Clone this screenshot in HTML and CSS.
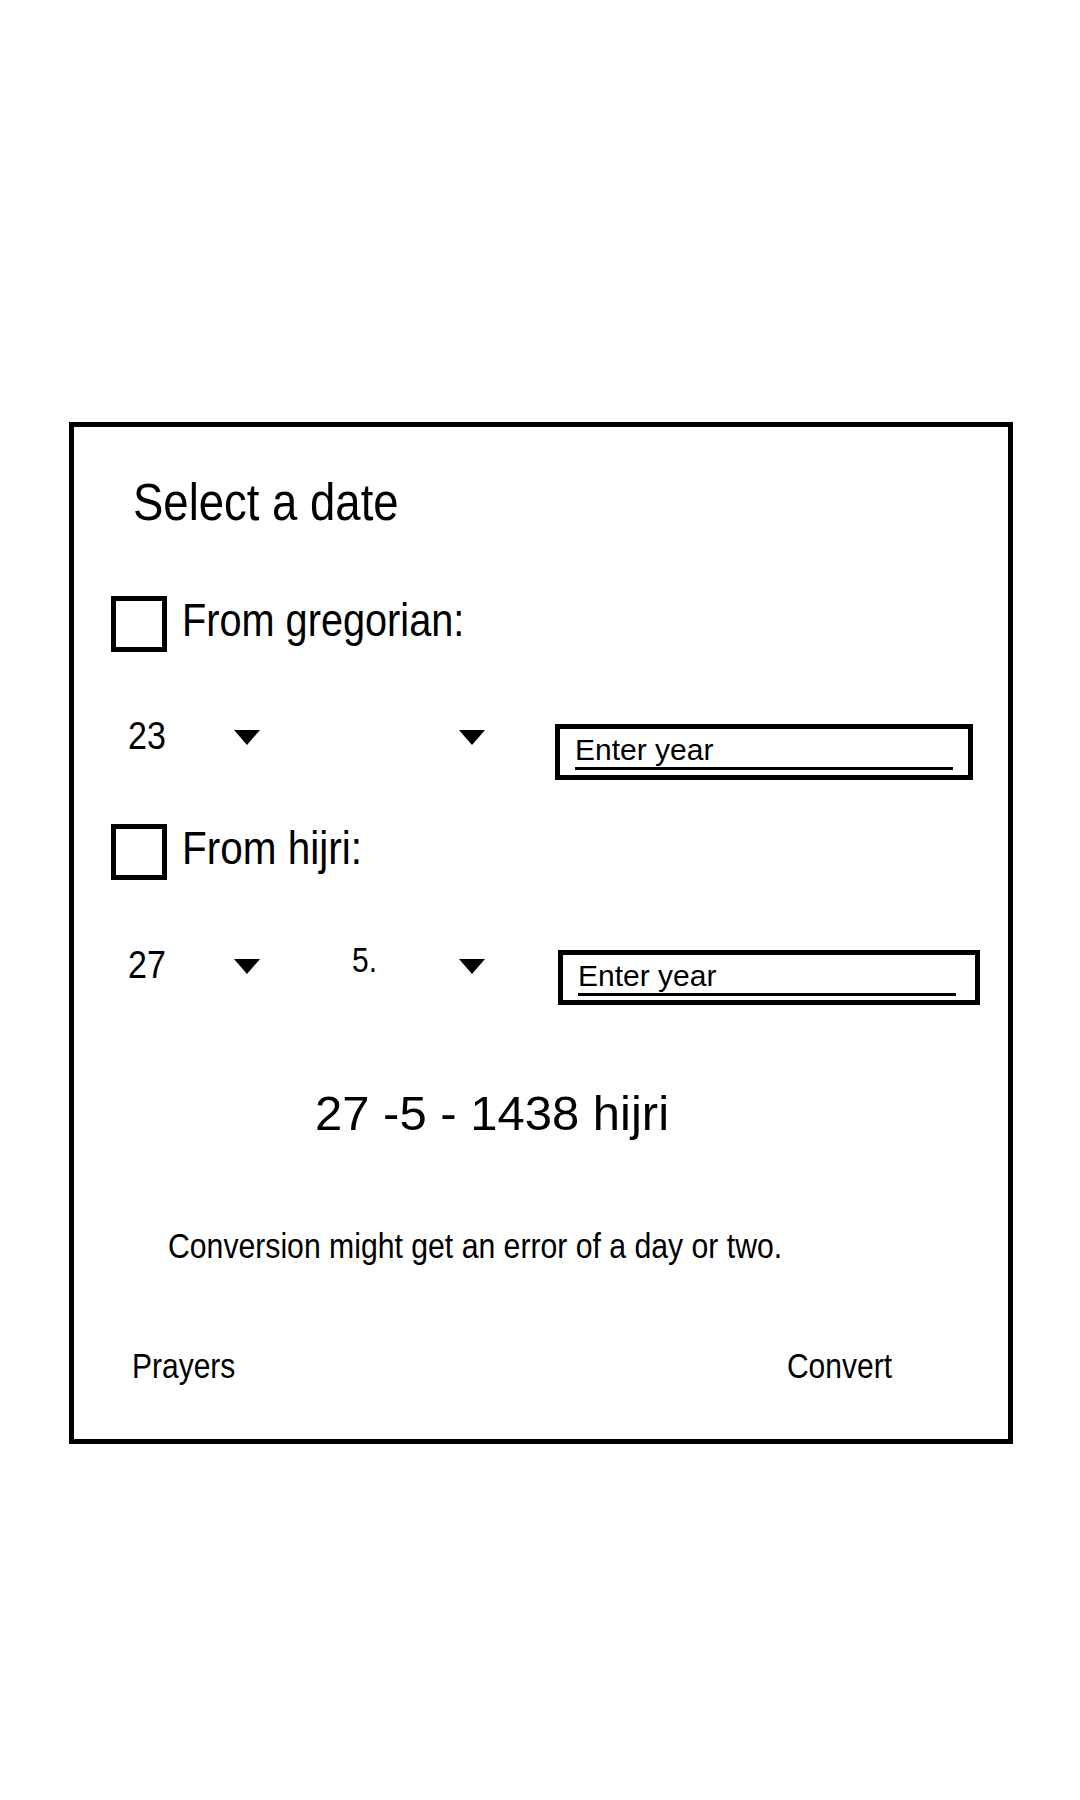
FILE: index.html
```html
<!DOCTYPE html>
<html lang="en">
<head>
    <meta charset="UTF-8">
    <meta name="viewport" content="width=device-width, initial-scale=1.0">
    <title>Date Converter</title>
    <link rel="stylesheet" href="styles.css">
</head>
<body>
    <div class="card">
        <h2 class="title"><span class="tall">Select a date</span></h2>

        <div class="option greg-option">
            <span class="box"></span>
            <span class="tall">From gregorian:</span>
        </div>

        <div class="date-row greg-row">
            <div class="select day-select">
                <span class="tall day">23</span>
                <span class="caret"></span>
            </div>
            <div class="select month-select">
                <span class="tall month"></span>
                <span class="caret"></span>
            </div>
            <div class="year-box">
                <span class="year-line">Enter year</span>
            </div>
        </div>

        <div class="option hijri-option">
            <span class="box"></span>
            <span class="tall">From hijri:</span>
        </div>

        <div class="date-row hijri-row">
            <div class="select day-select">
                <span class="tall day">27</span>
                <span class="caret"></span>
            </div>
            <div class="select month-select">
                <span class="tall month">5.</span>
                <span class="caret"></span>
            </div>
            <div class="year-box wide">
                <span class="year-line">Enter year</span>
            </div>
        </div>

        <div class="result">27 -5 - 1438 hijri</div>

        <p class="note"><span class="tall">Conversion might get an error of a day or two.</span></p>

        <div class="actions">
            <span class="tall">Prayers</span>
            <span class="tall">Convert</span>
        </div>
    </div>
</body>
</html>
```

FILE: styles.css
```css
body {
    margin: 0;
    background-color: #ffffff;
    font-family: "Liberation Sans", Arial, sans-serif;
    color: #000000;
}

.card {
    margin: 422px 67px 0 69px;
    border: 5px solid #000000;
    padding-bottom: 58px;
}

/* the mockup text is a little taller than plain Arial */
.tall {
    display: inline-block;
    line-height: 1;
    transform: scaleY(1.15);
    white-space: pre;
}

.title {
    margin: 53px 0 0 59px;
    font-size: 45.5px;
    font-weight: normal;
    line-height: 1;
}

.option {
    display: flex;
    align-items: center;
    gap: 15px;
    margin-left: 37px;
    font-size: 39.7px;
}

.option .tall {
    margin-bottom: 6px;
}

.greg-option {
    margin-top: 70px;
}

.hijri-option {
    margin-top: 44px;
    font-size: 40.5px;
}

.box {
    width: 56px;
    height: 56px;
    box-sizing: border-box;
    border: 5px solid #000000;
}

.date-row {
    display: flex;
    align-items: flex-start;
    margin-left: 54px;
}

.greg-row {
    margin-top: 66px;
}

.hijri-row {
    margin-top: 65px;
}

.select {
    display: flex;
    justify-content: space-between;
    align-items: flex-start;
}

.day-select {
    width: 132px;
}

.month-select {
    width: 133px;
    margin-left: 92px;
}

.day {
    font-size: 34px;
}

.month {
    font-size: 30px;
}

.hijri-row .day {
    margin-top: 2px;
}

.caret {
    width: 0;
    height: 0;
    border-left: 13px solid transparent;
    border-right: 13px solid transparent;
    border-top: 15px solid #000000;
    margin-top: 12px;
}

.hijri-row .caret {
    margin-top: 14px;
}

.year-box {
    width: 418px;
    height: 56px;
    box-sizing: border-box;
    margin: 6px 0 0 70px;
    border: 5px solid #000000;
    padding: 6px 0 0 15px;
}

.year-box.wide {
    width: 422px;
    height: 55px;
    margin: 5px 0 0 73px;
}

.year-line {
    display: block;
    width: 378px;
    font-size: 30px;
    line-height: 30px;
    padding-bottom: 2px;
    border-bottom: 3px solid #000000;
}

.result {
    margin: 84px 0 0 241px;
    font-size: 49px;
    line-height: 1;
}

.note {
    margin: 94px 0 0 94px;
    font-size: 30.2px;
    line-height: 1;
}

.actions {
    display: flex;
    justify-content: space-between;
    margin: 89px 116px 0 58px;
    font-size: 30px;
}
```
